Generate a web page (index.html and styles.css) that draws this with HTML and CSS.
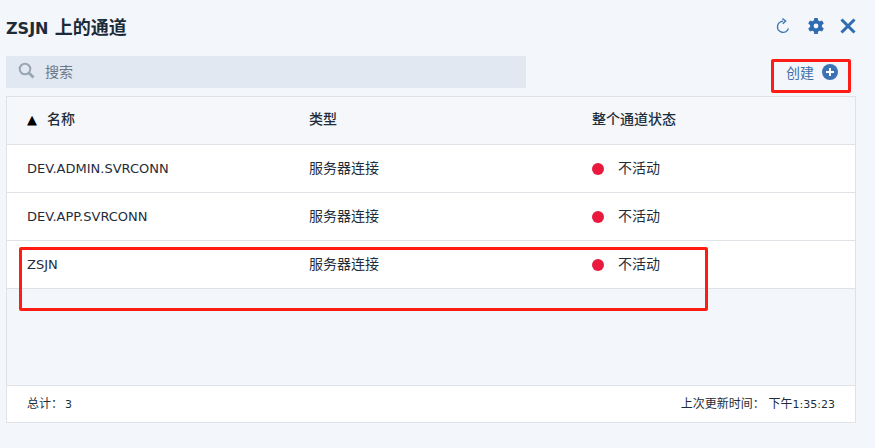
FILE: index.html
```html
<!DOCTYPE html>
<html lang="zh">
<head>
<meta charset="utf-8">
<title>ZSJN 上的通道</title>
<link rel="stylesheet" href="styles.css">
</head>
<body>
<div class="page">
  <header class="top">
    <h1 class="title"><span class="title-latin">ZSJN</span> 上的通道</h1>
    <div class="actions">
      <svg class="icon refresh" viewBox="0 0 14 16" width="14" height="16"><path d="M7 3.200a5.600 5.600 0 1 0 5.400 7.400" fill="none" stroke="#3d76b5" stroke-width="1.400"/><path d="M6.400.6 9.600 3 6.800 5.800" fill="none" stroke="#3d76b5" stroke-width="1.400"/></svg>
      <svg class="icon gear" viewBox="0 0 16 16" width="16" height="16">
        <circle cx="8" cy="8" r="4.200" fill="none" stroke="#2f6cb0" stroke-width="3.600"/>
        <g fill="#2f6cb0">
          <path d="M6.300 0h3.400l.5 3H5.800z"/>
          <path d="M6.300 0h3.400l.5 3H5.800z" transform="rotate(60 8 8)"/>
          <path d="M6.300 0h3.400l.5 3H5.800z" transform="rotate(120 8 8)"/>
          <path d="M6.300 0h3.400l.5 3H5.800z" transform="rotate(180 8 8)"/>
          <path d="M6.300 0h3.400l.5 3H5.800z" transform="rotate(240 8 8)"/>
          <path d="M6.300 0h3.400l.5 3H5.800z" transform="rotate(300 8 8)"/>
        </g>
      </svg>
      <svg class="icon close" viewBox="0 0 16 16" width="16" height="16"><path d="M1.500 1.500 14.500 14.500M14.500 1.500 1.500 14.500" stroke="#2f6cb0" stroke-width="3" fill="none"/></svg>
    </div>
  </header>

  <div class="tools">
    <div class="search">
      <svg class="search-icon" viewBox="0 0 17 17" width="17" height="17"><circle cx="7" cy="7" r="5.300" fill="none" stroke="#98a6b3" stroke-width="2"/><path d="M11 11l4.500 4.500" stroke="#98a6b3" stroke-width="2.800"/></svg>
      <span class="search-text">搜索</span>
    </div>
    <div class="create">
      <span>创建</span>
      <svg viewBox="0 0 16 16" width="16" height="16"><circle cx="8" cy="8" r="8" fill="#3d72b4"/><path d="M8 4v8M4 8h8" stroke="#fff" stroke-width="2"/></svg>
    </div>
  </div>

  <section class="panel">
    <div class="row head">
      <div class="cell"><span class="sort">▲</span>名称</div>
      <div class="cell">类型</div>
      <div class="cell">整个通道状态</div>
    </div>
    <div class="row">
      <div class="cell latin">DEV.ADMIN.SVRCONN</div>
      <div class="cell">服务器连接</div>
      <div class="cell"><i class="dot"></i>不活动</div>
    </div>
    <div class="row">
      <div class="cell latin">DEV.APP.SVRCONN</div>
      <div class="cell">服务器连接</div>
      <div class="cell"><i class="dot"></i>不活动</div>
    </div>
    <div class="row">
      <div class="cell latin">ZSJN</div>
      <div class="cell">服务器连接</div>
      <div class="cell"><i class="dot"></i>不活动</div>
    </div>
    <div class="spacer"></div>
    <footer class="foot">
      <span class="total">总计：<span class="foot-num">3</span></span>
      <span>上次更新时间： 下午<span class="foot-num">1:35:23</span></span>
    </footer>
  </section>

  <div class="mark mark-create"></div>
  <div class="mark mark-row"></div>
</div>
</body>
</html>
```

FILE: styles.css
```css
* { box-sizing: border-box; }
html, body { margin: 0; height: 100%; }
body {
  background: #f3f6fa;
  color: #1f2d3a;
  font-family: "DejaVu Sans", "Noto Sans CJK SC", sans-serif;
  font-size: 14px;
  overflow: hidden;
}
.page { position: relative; width: 875px; height: 448px; padding: 0 19px 0 6px; }
.top { display: flex; justify-content: space-between; align-items: center; height: 56px; padding-bottom: 5px; }
.title { margin: 0; font-size: 18px; font-weight: 700; color: #1c2b39; }
.title-latin { font-size: 16px; }
.actions { display: flex; align-items: center; gap: 16px; padding-top: 1px; }
.refresh { margin-right: 2px; }
.icon { display: block; }
.tools { display: flex; justify-content: space-between; height: 32px; }
.search { display: flex; align-items: center; width: 520px; background: #e1e8f2; padding: 0 0 3px 12px; }
.search-text { margin-left: 10px; font-size: 14px; color: #6d7885; }
.create { display: flex; align-items: center; gap: 8px; height: 32px; margin-right: 18px; color: #3f6fa8; font-size: 14px; }
.panel { display: flex; flex-direction: column; width: 850px; height: 327px; margin-top: 8px; border: 1px solid #dfe3e8; }
.row { display: grid; grid-template-columns: 282px 283px 1fr; align-items: flex-start; height: 48px; padding: 16px 0 0 20px; background: #fff; border-bottom: 1px solid #dfe3e8; line-height: 15px; }
.row.head { background: #f5f7fb; padding-top: 15px; font-weight: 500; }
.cell { display: flex; align-items: center; height: 15px; white-space: nowrap; }
.latin { font-size: 13px; }
.sort { width: 20px; font-size: 13px; color: #000; }
.dot { width: 12px; height: 12px; margin-right: 14px; border-radius: 50%; background: #e8193c; }
.spacer { flex: 1; }
.foot { display: flex; justify-content: space-between; align-items: center; height: 37px; padding: 0 20px 3px; background: #fff; border-top: 1px solid #dfe3e8; font-size: 12px; }
.foot-num { font-size: 11px; }
.total .foot-num { margin-left: 2px; }
.mark { position: absolute; border: 3px solid #ff1c14; border-radius: 2px; }
.mark-create { left: 771px; top: 59px; width: 80px; height: 34px; }
.mark-row { left: 19px; top: 247px; width: 689px; height: 64px; }
```
